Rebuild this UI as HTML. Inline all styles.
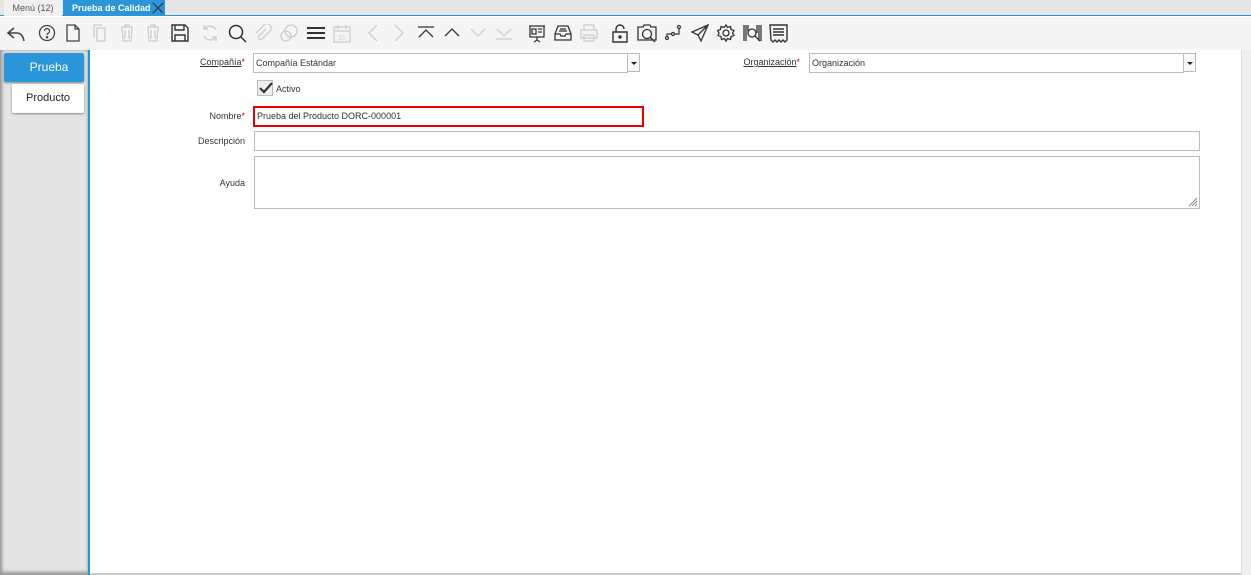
<!DOCTYPE html>
<html><head><meta charset="utf-8"><style>
*{box-sizing:border-box;margin:0;padding:0}
body{width:1251px;height:575px;overflow:hidden;background:#fff;font-family:"Liberation Sans","DejaVu Sans",sans-serif;font-size:9px;color:#333;position:relative}
.tabs{position:absolute;left:0;top:0;width:1251px;height:16px;background:#e6e6e6;border-bottom:1px solid #2a95d8}
.t1{position:absolute;left:4px;top:0;width:58px;height:16px;background:#f0f0f0;color:#555;font-size:9px;line-height:16px;text-align:center}
.t2{position:absolute;left:63px;top:0;width:102px;height:16px;background:#2a95d8;color:#fff;font-weight:bold;font-size:9px;line-height:16px;padding-left:9px}
.tb{position:absolute;left:0;top:17px;width:1251px;height:33px;background:#f5f5f5}
.tb svg{position:absolute;top:7px}
.side{position:absolute;left:0;top:50px;width:88px;height:525px;background:#e4e4e4;box-shadow:inset 2px 0 3px #999,inset 0 -3px 3px #999}
.blue{position:absolute;left:88px;top:50px;width:2px;height:525px;background:#1e96d8}
.right{position:absolute;left:1241px;top:50px;width:10px;height:525px;background:#efefef;border-left:1px solid #ddd}
.bot{position:absolute;left:90px;top:573px;width:1151px;height:2px;background:#ccc}
.st1{position:absolute;left:4px;top:53px;width:80px;height:29px;background:#2a95d8;color:#fff;font-size:12px;line-height:29px;text-align:center;padding-left:10px;border-radius:2px;box-shadow:0 1px 2px #888}
.st2{position:absolute;left:12px;top:84px;width:72px;height:29px;background:#fff;color:#222;font-size:11px;line-height:29px;text-align:center;border-radius:2px;box-shadow:0 1px 2px #888}
.lbl{position:absolute;font-size:9px;color:#333;text-align:right}
.lbl u{text-decoration:underline}
.req{color:#d00}
.in{position:absolute;border:1px solid #bbb;background:#fff;font-size:9px;padding-left:2px;line-height:18px}
.dd{position:absolute;width:13px;height:19px;border:1px solid #bbb;background:#fafafa}
.dd:after{content:"";position:absolute;left:3px;top:8px;border-left:3px solid transparent;border-right:3px solid transparent;border-top:3px solid #222}
</style></head><body>
<div class="tabs"><div class="t1">Menú (12)</div><div class="t2">Prueba de Calidad
<svg style="position:absolute;left:89px;top:2px" width="12" height="12" viewBox="0 0 12 12"><path d="M1 1L11 11M11 1L1 11" stroke="#333" stroke-width="1.2"/></svg></div></div>
<div class="tb">
<svg style="left:6px" width="20" height="20" viewBox="0 0 20 20" fill="none" stroke="#444" stroke-width="1.6"><path d="M8 4L2 9l6 5M2 9h9c4 0 6 3 7 8"/></svg>
<svg style="left:38px" width="18" height="18" viewBox="0 0 18 18" fill="none" stroke="#444" stroke-width="1.3"><circle cx="9" cy="9" r="7.5"/><path d="M6.5 7a2.5 2.5 0 1 1 3.5 2.3c-.8.4-1 .9-1 1.7"/><circle cx="9" cy="13.3" r=".6" fill="#444"/></svg>
<svg style="left:66px" width="14" height="18" viewBox="0 0 14 18" fill="none" stroke="#444" stroke-width="1.3"><path d="M1 1h8l4 4v12H1zM9 1v4h4"/></svg>
<svg style="left:93px" width="14" height="18" viewBox="0 0 14 18" fill="none" stroke="#ccc" stroke-width="1.3"><path d="M4 4h8v13H4zM1 14V1h8"/></svg>
<svg style="left:120px" width="14" height="18" viewBox="0 0 14 18" fill="none" stroke="#ccc" stroke-width="1.3"><path d="M1 3h12M5 3V1h4v2M2 4l1 13h8l1-13M5 6v9M9 6v9"/></svg>
<svg style="left:146px" width="14" height="18" viewBox="0 0 14 18" fill="none" stroke="#ccc" stroke-width="1.3"><path d="M1 3h12M5 3V1h4v2M2 4l1 13h8l1-13M5 6v9M9 6v9"/></svg>
<svg style="left:171px" width="18" height="18" viewBox="0 0 18 18" fill="none" stroke="#333" stroke-width="1.4"><path d="M1 1h13l3 3v13H1zM4 1v5h9V1M4 17v-6h10v6"/></svg>
<svg style="left:201px" width="18" height="18" viewBox="0 0 18 18" fill="none" stroke="#ccc" stroke-width="1.4"><path d="M15 6A7 7 0 0 0 3 5M3 12a7 7 0 0 0 12 1M3 1v4h4M15 17v-4h-4"/></svg>
<svg style="left:228px" width="19" height="19" viewBox="0 0 19 19" fill="none" stroke="#333" stroke-width="1.5"><circle cx="8" cy="8" r="6.5"/><path d="M13 13l5 5"/></svg>
<svg style="left:254px" width="18" height="18" viewBox="0 0 18 18" fill="none" stroke="#ccc" stroke-width="1.3"><path d="M12 5L5 12a2 2 0 0 0 3 3l8-8a4 4 0 0 0-6-6L2 9"/></svg>
<svg style="left:280px" width="18" height="18" viewBox="0 0 18 18" fill="none" stroke="#ccc" stroke-width="1.3"><circle cx="11" cy="7" r="6"/><circle cx="6" cy="12" r="5"/></svg>
<svg style="left:306px" width="20" height="18" viewBox="0 0 20 18" fill="none" stroke="#333" stroke-width="2"><path d="M1 4h18M1 9h18M1 14h18"/></svg>
<svg style="left:333px" width="18" height="19" viewBox="0 0 18 19" fill="none" stroke="#ccc" stroke-width="1.2"><path d="M1 3h16v15H1zM1 7h16M5 1v4M13 1v4"/><text x="5" y="16" font-size="7" fill="#ccc" stroke="none">31</text></svg>
<svg style="left:367px" width="12" height="18" viewBox="0 0 12 18" fill="none" stroke="#ccc" stroke-width="1.3"><path d="M10 1L2 9l8 8"/></svg>
<svg style="left:393px" width="12" height="18" viewBox="0 0 12 18" fill="none" stroke="#ccc" stroke-width="1.3"><path d="M2 1l8 8-8 8"/></svg>
<svg style="left:417px" width="18" height="18" viewBox="0 0 18 18" fill="none" stroke="#333" stroke-width="1.3"><path d="M1 3h16M2 13l7-7 7 7"/></svg>
<svg style="left:443px" width="18" height="18" viewBox="0 0 18 18" fill="none" stroke="#333" stroke-width="1.3"><path d="M2 12l7-7 7 7"/></svg>
<svg style="left:469px" width="18" height="18" viewBox="0 0 18 18" fill="none" stroke="#ccc" stroke-width="1.3"><path d="M2 5l7 7 7-7"/></svg>
<svg style="left:495px" width="18" height="18" viewBox="0 0 18 18" fill="none" stroke="#ccc" stroke-width="1.3"><path d="M2 5l7 7 7-7M1 15h16"/></svg>
<svg style="left:528px" width="18" height="19" viewBox="0 0 18 19" fill="none" stroke="#333" stroke-width="1.3"><path d="M1 2h16M2 2v11h14V2M9 13v3M6 18l3-2 3 2M4 5h4v5H4zM10 5h4M10 8h4"/></svg>
<svg style="left:554px" width="18" height="18" viewBox="0 0 18 18" fill="none" stroke="#333" stroke-width="1.3"><path d="M4 2h10l3 8v6H1v-6zM1 10h5l1 2h4l1-2h5M6 5h6M5 7h8"/></svg>
<svg style="left:580px" width="18" height="18" viewBox="0 0 18 18" fill="none" stroke="#ccc" stroke-width="1.3"><path d="M4 6V1h10v5M1 6h16v8H1zM4 11h10v6H4z"/></svg>
<svg style="left:612px" width="16" height="19" viewBox="0 0 16 19" fill="none" stroke="#333" stroke-width="1.4"><path d="M4 8V5a4 4 0 0 1 8 0M1 8h14v10H1z"/><circle cx="8" cy="13" r="1" fill="#333"/></svg>
<svg style="left:637px" width="20" height="19" viewBox="0 0 20 19" fill="none" stroke="#333" stroke-width="1.3"><path d="M1 3h5l1-2h6l1 2h5v13H1z"/><circle cx="10" cy="10" r="4.5"/><path d="M13 13l5 5"/></svg>
<svg style="left:664px" width="18" height="18" viewBox="0 0 18 18" fill="none" stroke="#333" stroke-width="1.2"><circle cx="3" cy="14" r="1.5"/><circle cx="9" cy="10" r="1.5"/><circle cx="15" cy="3" r="1.5"/><path d="M3 12v-2h4M11 10h4V5"/></svg>
<svg style="left:691px" width="18" height="18" viewBox="0 0 18 18" fill="none" stroke="#333" stroke-width="1.3"><path d="M17 1L1 8l6 3 3 6zM17 1L7 11"/></svg>
<svg style="left:717px" width="18" height="18" viewBox="0 0 18 18" fill="none" stroke="#333" stroke-width="1.3"><circle cx="9" cy="9" r="3"/><path d="M9 1l1.5 2.5 3-1 .5 3 3 1-1.5 2.5 1.5 2.5-3 1-.5 3-3-1L9 17l-1.5-2.5-3 1-.5-3-3-1L2 9 .5 6.5l3-1 .5-3 3 1z"/></svg>
<svg style="left:743px" width="19" height="19" viewBox="0 0 19 19" fill="none" stroke="#333" stroke-width="1.3"><path d="M1 1v16M3 1v16M5 1v6M14 1v8M16 1v16M18 1v16"/><circle cx="9" cy="9" r="4"/><path d="M12 12l5 5"/></svg>
<svg style="left:769px" width="19" height="19" viewBox="0 0 19 19" fill="none" stroke="#333" stroke-width="1.4"><path d="M1 1h17v15l-2 2-2-2-2 2-2-2-2 2-2-2-2 2-2-2z"/><path d="M4 5h11M4 8h11M4 11h11"/></svg>
</div>
<div class="side"></div>
<div class="st1">Prueba</div>
<div class="st2">Producto</div>
<div class="blue"></div>
<div class="right"></div>
<div class="bot"></div>

<div class="lbl" style="left:150px;top:57px;width:95px"><u>Compañía</u><span class="req">*</span></div>
<div class="in" style="left:253px;top:53px;width:375px;height:20px">Compañía Estándar</div>
<div class="dd" style="left:627px;top:53px"></div>
<div class="lbl" style="left:700px;top:57px;width:100px"><u>Organización</u><span class="req">*</span></div>
<div class="in" style="left:809px;top:53px;width:375px;height:20px">Organización</div>
<div class="dd" style="left:1183px;top:53px"></div>

<div style="position:absolute;left:257px;top:80px;width:16px;height:16px;border:1px solid #bbb;background:#eee"></div>
<svg style="position:absolute;left:258px;top:81px" width="15" height="14" viewBox="0 0 15 14" fill="none" stroke="#333" stroke-width="2.2"><path d="M2 7l4 4 8-9"/></svg>
<div style="position:absolute;left:276px;top:84px;font-size:9px">Activo</div>

<div class="lbl" style="left:150px;top:111px;width:95px">Nombre<span class="req">*</span></div>
<div class="in" style="left:253px;top:106px;width:391px;height:21px;border:2px solid #e00;line-height:17px;padding-left:2px">Prueba del Producto DORC-000001</div>

<div class="lbl" style="left:150px;top:136px;width:95px">Descripción</div>
<div class="in" style="left:254px;top:131px;width:946px;height:20px"></div>
<div class="lbl" style="left:150px;top:178px;width:95px">Ayuda</div>
<div class="in" style="left:254px;top:156px;width:946px;height:53px"></div>
<svg style="position:absolute;left:1188px;top:197px" width="10" height="10" viewBox="0 0 10 10" stroke="#888" stroke-width="1"><path d="M9 1L1 9M9 4L4 9M9 7L7 9"/></svg>
</body></html>
